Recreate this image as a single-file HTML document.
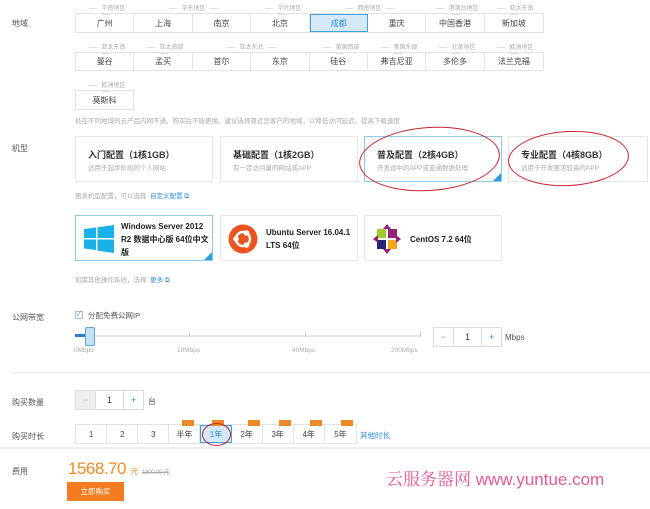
<!DOCTYPE html>
<html><head><meta charset="utf-8"><style>
*{margin:0;padding:0;box-sizing:border-box}
body{width:650px;height:509px;background:#fff;font-family:"Liberation Sans","Noto Sans CJK SC",sans-serif;color:#333;position:relative;overflow:hidden;font-size:8px}
.a{position:absolute}
.lbl{position:absolute;left:12px;font-size:8px;color:#555}
.row{position:absolute;left:75px;display:flex;border:1px solid #e3e3e3}
.row div{width:58.4px;height:100%;border-right:1px solid #e3e3e3;display:flex;align-items:center;justify-content:center;font-size:8px;color:#444}
.grp{position:absolute;font-size:6px;color:#aaa;text-align:center}
.grp:before,.grp:after{content:"";display:inline-block;vertical-align:middle;height:1px;background:#ddd;width:8px;margin:0 4px}
.card{position:absolute;border:1px solid #e6e6e6;background:#fff}
.card .t{position:absolute;left:12px;top:11px;font-size:9px;font-weight:bold;color:#333}
.card .s{position:absolute;left:12px;top:25px;font-size:6.5px;color:#aaa}
.sel{border-color:#8fcbe6}
.sel:after{content:"";position:absolute;right:0;bottom:0;border-left:8px solid transparent;border-bottom:8px solid #2d9be0}
.note{position:absolute;left:75px;font-size:6.5px;color:#aaa}
.note b{color:#2d8fd8;font-weight:normal}
.os .t{position:absolute;left:45px;font-size:8px;font-weight:bold;color:#222;line-height:13px}
.num{position:absolute;display:flex;border:1px solid #ddd;height:20px}
.num div{display:flex;align-items:center;justify-content:center;font-size:9px}
.ell{position:absolute;border:1.5px solid #c8242e;border-radius:50%}
</style></head><body>
<div class="lbl" style="top:18px">地域</div>
<div class="grp" style="left:78px;top:3px;width:55px">华南地区</div>
<div class="grp" style="left:136px;top:3px;width:115px">华东地区</div>
<div class="grp" style="left:254px;top:3px;width:55px">华北地区</div>
<div class="grp" style="left:312px;top:3px;width:115px">西南地区</div>
<div class="grp" style="left:428px;top:3px;width:55px">港澳台地区</div>
<div class="grp" style="left:486px;top:3px;width:55px">亚太东南</div>
<div class="row" style="top:13px;height:20px"><div>广州</div><div>上海</div><div>南京</div><div>北京</div><div style="background:#d5e9f8;border:1px solid #3aa7e0;color:#2d8fd8">成都</div><div>重庆</div><div>中国香港</div><div style="border:0">新加坡</div></div>
<div class="grp" style="left:78px;top:42px;width:55px">亚太东南</div>
<div class="grp" style="left:136px;top:42px;width:55px">亚太南部</div>
<div class="grp" style="left:194px;top:42px;width:115px">亚太东北</div>
<div class="grp" style="left:312px;top:42px;width:55px">美国西部</div>
<div class="grp" style="left:370px;top:42px;width:55px">美国东部</div>
<div class="grp" style="left:428px;top:42px;width:55px">北美地区</div>
<div class="grp" style="left:486px;top:42px;width:55px">欧洲地区</div>
<div class="row" style="top:52px;height:19px"><div>曼谷</div><div>孟买</div><div>首尔</div><div>东京</div><div>硅谷</div><div>弗吉尼亚</div><div>多伦多</div><div style="border:0">法兰克福</div></div>
<div class="grp" style="left:78px;top:80px;width:55px">欧洲地区</div>
<div class="row" style="top:90px;height:20px;width:59px"><div style="border:0">莫斯科</div></div>
<div class="note" style="top:115px">处在不同地域的云产品内网不通，购买后不能更换。建议选择靠近您客户的地域，以降低访问延迟、提高下载速度</div>

<div class="lbl" style="top:143px">机型</div>
<div class="card" style="left:75px;top:136px;width:138px;height:46px"><div class="t">入门配置（1核1GB）</div><div class="s">适用于起步阶段的个人网站</div></div>
<div class="card" style="left:220px;top:136px;width:138px;height:46px"><div class="t">基础配置（1核2GB）</div><div class="s">有一定访问量的网站或APP</div></div>
<div class="card sel" style="left:364px;top:136px;width:138px;height:46px"><div class="t">普及配置（2核4GB）</div><div class="s">开发适中的APP或普通数据处理</div></div>
<div class="card" style="left:508px;top:136px;width:140px;height:46px"><div class="t">专业配置（4核8GB）</div><div class="s">适用于开发要求较高的APP</div></div>
<div class="ell" style="left:359px;top:127px;width:141px;height:64px;transform:rotate(-4deg)"></div>
<div class="ell" style="left:508px;top:131px;width:121px;height:55px;transform:rotate(-3deg)"></div>
<div class="note" style="top:190px">更多机型配置，可以选择 &nbsp;<b>自定义配置 ⧉</b></div>

<div class="card sel os" style="left:75px;top:215px;width:138px;height:46px">
<svg class="a" style="left:8px;top:9px" width="30" height="28" viewBox="0 0 30 28"><path fill="#1ab0e8" d="M0 4 12 2.5V13H0zM13.5 2.3 30 0V13H13.5zM0 14.5H12V25L0 23.5zM13.5 14.5H30V28L13.5 25.7z"/></svg>
<div class="t" style="top:4px">Windows Server 2012<br>R2 数据中心版 64位中文<br>版</div></div>
<div class="card os" style="left:220px;top:215px;width:138px;height:46px">
<svg class="a" style="left:7px;top:8px" width="30" height="30" viewBox="0 0 30 30"><circle cx="15" cy="15" r="14.5" fill="#e95420"/><circle cx="15" cy="15" r="7" fill="none" stroke="#fff" stroke-width="2.5"/><circle cx="8" cy="15" r="2.8" fill="#fff"/><circle cx="18.5" cy="9" r="2.8" fill="#fff"/><circle cx="18.5" cy="21" r="2.8" fill="#fff"/></svg>
<div class="t" style="top:10px">Ubuntu Server 16.04.1<br>LTS 64位</div></div>
<div class="card os" style="left:364px;top:215px;width:138px;height:46px">
<svg class="a" style="left:8px;top:8px" width="28" height="30" viewBox="0 0 28 30"><rect x="4" y="5" width="9" height="9" fill="#9ccd2a"/><rect x="15" y="5" width="9" height="9" fill="#932279"/><rect x="4" y="16" width="9" height="9" fill="#262577"/><rect x="15" y="16" width="9" height="9" fill="#efa724"/><path d="M14 0l4 5h-8zM14 30l4-5h-8zM0 15l5-4v8zM28 15l-5-4v8z" fill="#932279"/></svg>
<div class="t" style="top:17px">CentOS 7.2 64位</div></div>
<div class="note" style="top:274px">如需其他操作系统，选择 &nbsp;<b>更多 ⧉</b></div>

<div class="lbl" style="top:312px">公网带宽</div>
<div class="a" style="left:75px;top:311px;width:8px;height:8px;border:1px solid #bbb;font-size:7px;color:#2d8fd8;line-height:6px;text-align:center">✓</div>
<div class="a" style="left:88px;top:310px;font-size:7.5px;color:#555">分配免费公网IP</div>
<div class="a" style="left:75px;top:335px;width:346px;height:2px;background:#e6e6e6"></div>
<div class="a" style="left:75px;top:334px;width:14px;height:3px;background:#2d7cc8"></div>
<div class="a" style="left:85px;top:327px;width:10px;height:19px;background:#c5e1f6;border:1px solid #5aa8e0;border-radius:2px"></div>
<div class="a" style="left:189px;top:332px;width:1px;height:5px;background:#ccc"></div>
<div class="a" style="left:305px;top:332px;width:1px;height:5px;background:#ccc"></div>
<div class="a" style="left:420px;top:332px;width:1px;height:5px;background:#ccc"></div>
<div class="a" style="left:74px;top:347px;font-size:6.5px;color:#aaa">0Mbps</div>
<div class="a" style="left:177px;top:347px;font-size:6.5px;color:#aaa">10Mbps</div>
<div class="a" style="left:292px;top:347px;font-size:6.5px;color:#aaa">40Mbps</div>
<div class="a" style="left:391px;top:347px;font-size:6.5px;color:#aaa">200Mbps</div>
<div class="num" style="left:433px;top:327px;width:69px"><div style="width:20px;color:#999;border-right:1px solid #ddd">−</div><div style="width:28px">1</div><div style="width:20px;color:#2d8fd8;border-left:1px solid #ddd">+</div></div>
<div class="a" style="left:505px;top:333px;font-size:8px;color:#555">Mbps</div>
<div class="a" style="left:12px;top:372px;width:638px;height:1px;background:#eee"></div>

<div class="lbl" style="top:397px">购买数量</div>
<div class="num" style="left:75px;top:390px;width:69px"><div style="width:20px;color:#bbb;background:#eee;border-right:1px solid #ddd">−</div><div style="width:28px">1</div><div style="width:20px;color:#2d8fd8;border-left:1px solid #ddd">+</div></div>
<div class="a" style="left:148px;top:396px;font-size:8px;color:#555">台</div>

<div class="lbl" style="top:431px">购买时长</div>
<div class="row" style="top:424px;height:20px;width:282px"><div style="width:31.2px">1</div><div style="width:31.2px">2</div><div style="width:31.2px">3</div><div style="width:31.2px">半年</div><div style="width:31.2px;background:#d5e9f8;border:1px solid #3aa7e0;color:#2d8fd8">1年</div><div style="width:31.2px">2年</div><div style="width:31.2px">3年</div><div style="width:31.2px">4年</div><div style="width:31.2px;border:0">5年</div></div>
<div class="a" style="left:182px;top:420px;width:12px;height:6px;background:#f08a24"></div>
<div class="a" style="left:212px;top:420px;width:12px;height:6px;background:#f08a24"></div>
<div class="a" style="left:248px;top:420px;width:12px;height:6px;background:#f08a24"></div>
<div class="a" style="left:279px;top:420px;width:12px;height:6px;background:#f08a24"></div>
<div class="a" style="left:310px;top:420px;width:12px;height:6px;background:#f08a24"></div>
<div class="a" style="left:341px;top:420px;width:12px;height:6px;background:#f08a24"></div>
<div class="ell" style="left:202px;top:423px;width:29px;height:23px"></div>
<div class="a" style="left:360px;top:430px;font-size:7.5px;color:#2d8fd8">其他时长</div>

<div class="a" style="left:0;top:447px;width:650px;height:2px;background:#ececec"></div>
<div class="lbl" style="top:466px">费用</div>
<div class="a" style="left:68px;top:459px;font-size:17px;color:#f08a24;letter-spacing:-0.5px">1568.70 <span style="font-size:8px">元</span> <span style="font-size:6.5px;color:#aaa;text-decoration:line-through">1800.00 元</span></div>
<div class="a" style="left:67px;top:482px;width:57px;height:19px;background:#f47c20;color:#fff;font-size:7.5px;line-height:19px;text-align:center">立即购买</div>
<div class="a" style="left:386px;top:465px;font-size:17px;color:#e05a9a;font-family:'Liberation Sans','Noto Serif CJK SC',sans-serif;white-space:nowrap">云服务器网 www.yuntue.com</div>
</body></html>
